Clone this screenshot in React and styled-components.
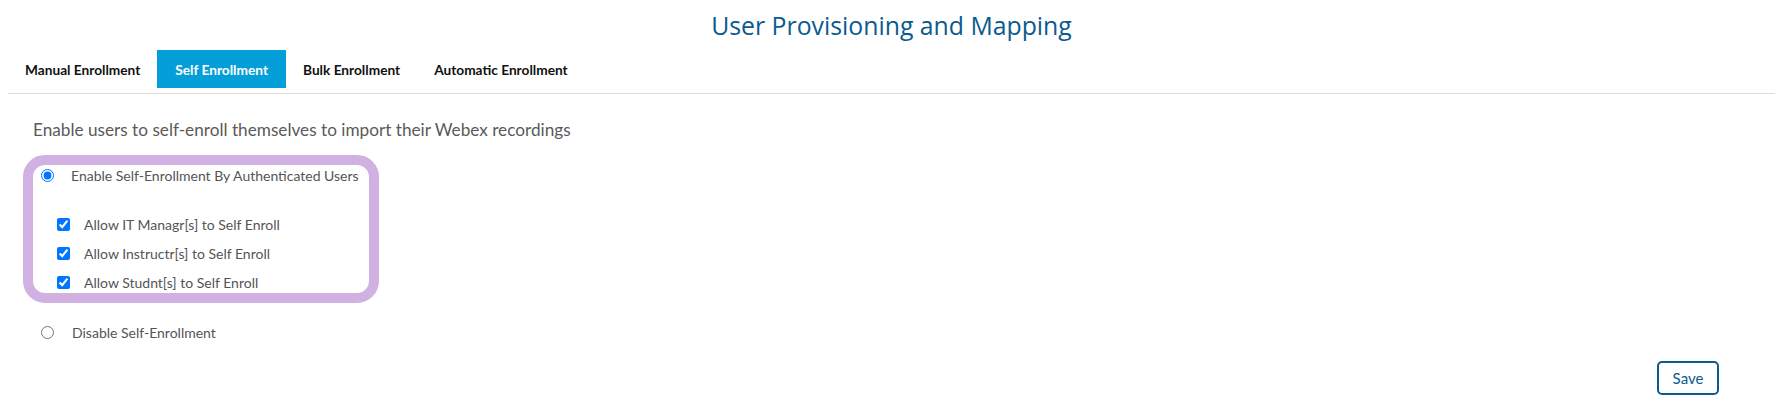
import React, { useState } from "react";
import styled, { createGlobalStyle } from "styled-components";

const Global = createGlobalStyle`
  html, body { margin: 0; padding: 0; background: #fff; }
  body { font-family: "Lato", "Open Sans", sans-serif; }
`;

const Page = styled.div`
  width: 1775px;
  height: 410px;
  padding-left: 8px;
  box-sizing: border-box;
  display: flex;
  flex-direction: column;
`;

const Title = styled.h1`
  margin: 0;
  height: 50px;
  display: flex;
  align-items: center;
  justify-content: center;
  font-family: "Open Sans", sans-serif;
  font-weight: 400;
  font-size: 24.8px;
  color: #0b5a90;
`;

const TabBar = styled.div`
  display: flex;
  align-items: stretch;
  padding-bottom: 5px;
  border-bottom: 1px solid #dcdcdc;
`;

const Tab = styled.button`
  height: 38px;
  padding: 0 ${(p) => p.$pad}px;
  border: none;
  background: ${(p) => (p.$active ? "#049fd9" : "transparent")};
  color: ${(p) => (p.$active ? "#fff" : "#111")};
  font-family: "Lato", sans-serif;
  font-weight: 700;
  font-size: 13.7px;
  cursor: pointer;
`;

const Content = styled.div`
  flex: 1;
  display: flex;
  flex-direction: column;
  padding: 26px 56px 0 15px;
`;

const Description = styled.p`
  margin: 0 0 15px 10px;
  font-family: "Lato", sans-serif;
  font-size: 17.2px;
  line-height: 20px;
  color: #5a5a5a;
`;

const Highlight = styled.div`
  width: 356px;
  box-sizing: border-box;
  border: 10px solid #d0b1e2;
  border-radius: 22px;
  display: flex;
  flex-direction: column;
  padding: 2px 0 0 8px;
  height: 148px;
`;

const OptionRow = styled.label`
  display: flex;
  align-items: center;
  height: ${(p) => p.$h || 16}px;
  padding-left: ${(p) => p.$indent || 0}px;
  margin-top: ${(p) => p.$mt || 0}px;
  font-family: "Lato", sans-serif;
  font-size: 14px;
  color: #555;
  cursor: pointer;
`;

const Radio = styled.input.attrs({ type: "radio" })`
  width: 13px;
  height: 13px;
  margin: 0 ${(p) => p.$gap}px 0 0;
  accent-color: #0075ff;
`;

const Check = styled.input.attrs({ type: "checkbox" })`
  width: 13px;
  height: 13px;
  margin: 0 14px 0 0;
  accent-color: #0075ff;
`;

const Outside = styled.div`
  padding-left: 18px;
`;

const Footer = styled.div`
  display: flex;
  justify-content: flex-end;
  margin-top: 19px;
`;

const SaveButton = styled.button`
  width: 62px;
  height: 34px;
  border: 2px solid #0b5a90;
  border-radius: 5px;
  background: #fff;
  color: #0b5a90;
  font-family: "Lato", sans-serif;
  font-size: 15px;
  cursor: pointer;
`;

const tabs = [
  { label: "Manual Enrollment", pad: 17 },
  { label: "Self Enrollment", pad: 18 },
  { label: "Bulk Enrollment", pad: 17 },
  { label: "Automatic Enrollment", pad: 17 },
];

export default function App() {
  const [mode, setMode] = useState("enable");
  const [checks, setChecks] = useState([true, true, true]);
  const labels = [
    "Allow IT Managr[s] to Self Enroll",
    "Allow Instructr[s] to Self Enroll",
    "Allow Studnt[s] to Self Enroll",
  ];
  return (
    <>
      <Global />
      <Page>
        <Title>User Provisioning and Mapping</Title>
        <TabBar>
          {tabs.map((t) => (
            <Tab key={t.label} $pad={t.pad} $active={t.label === "Self Enrollment"}>
              {t.label}
            </Tab>
          ))}
        </TabBar>
        <Content>
          <Description>
            Enable users to self-enroll themselves to import their Webex recordings
          </Description>
          <Highlight>
            <OptionRow $h={16}>
              <Radio
                $gap={17}
                name="mode"
                checked={mode === "enable"}
                onChange={() => setMode("enable")}
              />
              Enable Self-Enrollment By Authenticated Users
            </OptionRow>
            {labels.map((l, i) => (
              <OptionRow key={l} $h={22} $indent={16} $mt={i === 0 ? 31 : 7}>
                <Check
                  checked={checks[i]}
                  onChange={() =>
                    setChecks((c) => c.map((v, j) => (j === i ? !v : v)))
                  }
                />
                {l}
              </OptionRow>
            ))}
          </Highlight>
          <Outside>
            <OptionRow $h={20} $mt={19}>
              <Radio
                $gap={18}
                name="mode"
                checked={mode === "disable"}
                onChange={() => setMode("disable")}
              />
              Disable Self-Enrollment
            </OptionRow>
          </Outside>
          <Footer>
            <SaveButton>Save</SaveButton>
          </Footer>
        </Content>
      </Page>
    </>
  );
}
